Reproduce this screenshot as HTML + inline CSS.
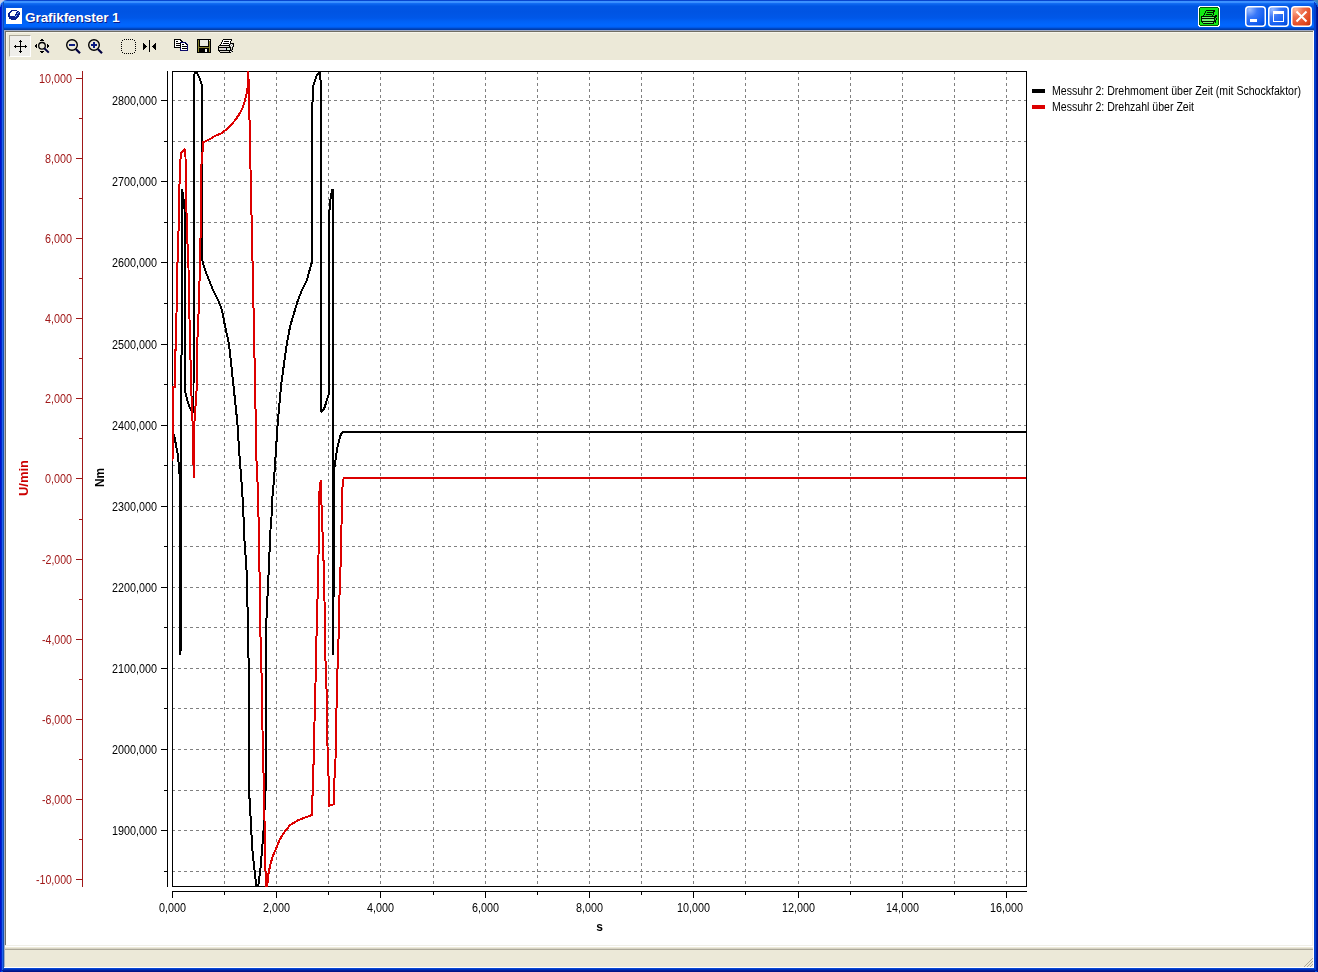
<!DOCTYPE html>
<html><head><meta charset="utf-8"><title>Grafikfenster 1</title>
<style>
html,body{margin:0;padding:0;}
body{width:1318px;height:972px;overflow:hidden;position:relative;background:#c4cce8;font-family:"Liberation Sans",sans-serif;}
.abs{position:absolute;}
#title{left:0;top:0;width:1318px;height:30px;border-radius:7px 7px 0 0;
background:linear-gradient(to bottom,#0846d0 0px,#0846d0 1px,#3d95ff 1px,#3a8cff 3px,#1a72f5 3px,#0a66f0 4px,#0860ea 5px,#0056e4 6px,#0054e3 12px,#0057e8 18px,#0060f5 21px,#0066ff 25px,#0062f8 27px,#0050d8 28px,#0040b0 29px,#003aa8 30px);}
#ttext{left:25px;top:8.6px;font-weight:bold;font-size:13.6px;line-height:17px;color:#fff;text-shadow:1px 1px 0 #0a1e8c;letter-spacing:-0.1px;white-space:nowrap;}
.tb{font-size:11px;color:#000;white-space:nowrap;}
</style></head><body>

<div class="abs" style="left:1308px;top:0;width:10px;height:8px;background:#3a80c0;"></div>
<div class="abs" style="left:0;top:30px;width:1318px;height:942px;background:#0054e3;"></div>
<div class="abs" style="left:4px;top:968px;width:1310px;height:1px;background:#0848d8;"></div>
<div class="abs" style="left:1px;top:969px;width:1316px;height:1px;background:#0030b8;"></div>
<div class="abs" style="left:2px;top:970px;width:1314px;height:1px;background:#00209c;"></div>
<div class="abs" style="left:3px;top:971px;width:1312px;height:1px;background:#001488;"></div>
<div id="title" class="abs"></div>
<div class="abs" style="left:0px;top:7px;width:1px;height:965px;background:#0010d0;"></div>
<div class="abs" style="left:1px;top:5px;width:1px;height:966px;background:#0028c8;"></div>
<div class="abs" style="left:2px;top:3px;width:1px;height:967px;background:#2060f0;"></div>
<div class="abs" style="left:3px;top:2px;width:1px;height:967px;background:#1050b8;"></div>
<div class="abs" style="left:1314px;top:2px;width:1px;height:967px;background:#0840c8;"></div>
<div class="abs" style="left:1315px;top:3px;width:1px;height:967px;background:#0040d0;"></div>
<div class="abs" style="left:1316px;top:5px;width:1px;height:966px;background:#001c9c;"></div>
<div class="abs" style="left:1317px;top:7px;width:1px;height:965px;background:#001090;"></div>
<div class="abs" style="left:4px;top:30px;width:1310px;height:938px;background:#ece9d8;"></div>
<div class="abs" style="left:4px;top:30px;width:1px;height:938px;background:#a0acc8;"></div>
<div class="abs" style="left:4px;top:30px;width:1310px;height:1px;background:#a0acc8;"></div>
<div class="abs" style="left:5px;top:31px;width:1px;height:914px;background:#716f64;"></div>
<div class="abs" style="left:5px;top:31px;width:1308px;height:1px;background:#716f64;"></div>
<div class="abs" style="left:6px;top:32px;width:1306px;height:1px;background:#f7f5ec;"></div>
<div class="abs" style="left:6px;top:32px;width:1px;height:28px;background:#f7f5ec;"></div>
<div class="abs" style="left:1313px;top:31px;width:1px;height:937px;background:#ffffff;"></div>
<div class="abs" style="left:6px;top:60px;width:1306px;height:885px;background:#ffffff;"></div>
<div class="abs" style="left:1312px;top:60px;width:1px;height:885px;background:#f0efe8;"></div>
<div class="abs" style="left:6px;top:945px;width:1307px;height:1px;background:#f0efe8;"></div>
<div class="abs" style="left:5px;top:946px;width:1308px;height:1px;background:#ffffff;"></div>
<div class="abs" style="left:5px;top:949px;width:1308px;height:1px;background:#aca899;"></div>
<div class="abs" style="left:5px;top:948px;width:1308px;height:1px;background:#d8d4c4;"></div>
<div class="abs" style="left:4px;top:967px;width:1310px;height:1px;background:#ffffff;"></div>
<svg class="abs" style="left:1304px;top:958px" width="9" height="9" viewBox="0 0 9 9" shape-rendering="crispEdges">
<g fill="#aca899"><rect x="7" y="1" width="1" height="1"/><rect x="6" y="2" width="1" height="1"/><rect x="5" y="3" width="1" height="1"/><rect x="4" y="4" width="1" height="1"/><rect x="3" y="5" width="1" height="1"/><rect x="2" y="6" width="1" height="1"/><rect x="1" y="7" width="1" height="1"/>
<rect x="7" y="4" width="1" height="1"/><rect x="6" y="5" width="1" height="1"/><rect x="5" y="6" width="1" height="1"/><rect x="4" y="7" width="1" height="1"/>
<rect x="7" y="7" width="1" height="1"/>
<rect x="8" y="0" width="1" height="1"/><rect x="8" y="3" width="1" height="1"/><rect x="8" y="6" width="1" height="1"/><rect x="0" y="8" width="1" height="1"/><rect x="3" y="8" width="1" height="1"/><rect x="6" y="8" width="1" height="1"/></g>
</svg>
<svg class="abs" style="left:6px;top:8px" width="16" height="16" viewBox="6 8 16 16" shape-rendering="crispEdges"><rect x="6" y="8" width="16" height="16" fill="#fff"/><rect x="11" y="10" width="6" height="1" fill="#0a1e90"/><rect x="10" y="11" width="2" height="1" fill="#0a1e90"/><rect x="17" y="11" width="2" height="1" fill="#0a1e90"/><rect x="9" y="12" width="2" height="1" fill="#0a1e90"/><rect x="16" y="12" width="2" height="1" fill="#0a1e90"/><rect x="18" y="12" width="1" height="1" fill="#7fb0ff"/><rect x="19" y="12" width="1" height="1" fill="#0a1e90"/><rect x="8" y="13" width="2" height="1" fill="#0a1e90"/><rect x="16" y="13" width="1" height="1" fill="#0a1e90"/><rect x="17" y="13" width="1" height="1" fill="#7fb0ff"/><rect x="18" y="13" width="2" height="1" fill="#0a1e90"/><rect x="8" y="14" width="2" height="1" fill="#0a1e90"/><rect x="15" y="14" width="5" height="1" fill="#0a1e90"/><rect x="8" y="15" width="2" height="1" fill="#0a1e90"/><rect x="15" y="15" width="1" height="1" fill="#0a1e90"/><rect x="16" y="15" width="1" height="1" fill="#7fb0ff"/><rect x="17" y="15" width="2" height="1" fill="#0a1e90"/><rect x="8" y="16" width="7" height="1" fill="#0a1e90"/><rect x="15" y="16" width="1" height="1" fill="#7fb0ff"/><rect x="16" y="16" width="3" height="1" fill="#0a1e90"/><rect x="9" y="17" width="9" height="1" fill="#0a1e90"/><rect x="9" y="18" width="8" height="1" fill="#0a1e90"/><rect x="11" y="19" width="5" height="1" fill="#0a1e90"/></svg>
<div id="ttext" class="abs">Grafikfenster 1</div>
<svg class="abs" style="left:1198px;top:6px" width="22" height="21" viewBox="1198 6 22 21" shape-rendering="crispEdges"><rect x="1198" y="7" width="22" height="19" fill="#fff"/><rect x="1199" y="6" width="20" height="21" fill="#fff"/><rect x="1199" y="8" width="20" height="17" fill="#006000"/><rect x="1200" y="7" width="18" height="19" fill="#006000"/><rect x="1200" y="8" width="18" height="17" fill="#14ea14"/><rect x="1206" y="10" width="9" height="1" fill="#001400"/><rect x="1205" y="11" width="1" height="1" fill="#001400"/><rect x="1213" y="11" width="2" height="1" fill="#001400"/><rect x="1205" y="12" width="1" height="1" fill="#001400"/><rect x="1207" y="12" width="7" height="1" fill="#001400"/><rect x="1204" y="13" width="1" height="1" fill="#001400"/><rect x="1213" y="13" width="1" height="1" fill="#001400"/><rect x="1204" y="14" width="1" height="1" fill="#001400"/><rect x="1206" y="14" width="6" height="1" fill="#001400"/><rect x="1213" y="14" width="1" height="1" fill="#001400"/><rect x="1203" y="15" width="1" height="1" fill="#001400"/><rect x="1212" y="15" width="1" height="1" fill="#001400"/><rect x="1215" y="15" width="2" height="1" fill="#001400"/><rect x="1201" y="16" width="16" height="1" fill="#001400"/><rect x="1201" y="17" width="1" height="1" fill="#001400"/><rect x="1202" y="17" width="12" height="1" fill="#70f070"/><rect x="1214" y="17" width="2" height="1" fill="#001400"/><rect x="1201" y="18" width="14" height="1" fill="#001400"/><rect x="1216" y="18" width="1" height="1" fill="#001400"/><rect x="1201" y="19" width="1" height="1" fill="#001400"/><rect x="1202" y="19" width="12" height="1" fill="#70f070"/><rect x="1214" y="19" width="1" height="1" fill="#001400"/><rect x="1216" y="19" width="1" height="1" fill="#001400"/><rect x="1201" y="20" width="1" height="1" fill="#001400"/><rect x="1202" y="20" width="12" height="1" fill="#70f070"/><rect x="1214" y="20" width="2" height="1" fill="#001400"/><rect x="1201" y="21" width="15" height="1" fill="#001400"/><rect x="1202" y="22" width="1" height="1" fill="#001400"/><rect x="1203" y="22" width="10" height="1" fill="#70f070"/><rect x="1213" y="22" width="1" height="1" fill="#001400"/><rect x="1215" y="22" width="1" height="1" fill="#001400"/><rect x="1203" y="23" width="11" height="1" fill="#001400"/></svg>
<svg class="abs" style="left:1245px;top:6px" width="21" height="21" viewBox="0 0 21 21"><defs><radialGradient id="gblue" cx="0.2" cy="0.15" r="1.1"><stop offset="0" stop-color="#9bbcff"/><stop offset="0.35" stop-color="#3a78f8"/><stop offset="0.8" stop-color="#0a58ee"/><stop offset="1" stop-color="#0044c8"/></radialGradient><radialGradient id="gclose" cx="0.2" cy="0.15" r="1.1"><stop offset="0" stop-color="#ffb89a"/><stop offset="0.35" stop-color="#ee7050"/><stop offset="0.8" stop-color="#e0441a"/><stop offset="1" stop-color="#b83010"/></radialGradient></defs><rect x="0.75" y="0.75" width="19.5" height="19.5" rx="3" fill="url(#gblue)" stroke="#ffffff" stroke-width="1.5"/><rect x="5" y="13" width="7" height="3" fill="#fff"/></svg>
<svg class="abs" style="left:1268px;top:6px" width="21" height="21" viewBox="0 0 21 21"><defs><radialGradient id="gblue" cx="0.2" cy="0.15" r="1.1"><stop offset="0" stop-color="#9bbcff"/><stop offset="0.35" stop-color="#3a78f8"/><stop offset="0.8" stop-color="#0a58ee"/><stop offset="1" stop-color="#0044c8"/></radialGradient><radialGradient id="gclose" cx="0.2" cy="0.15" r="1.1"><stop offset="0" stop-color="#ffb89a"/><stop offset="0.35" stop-color="#ee7050"/><stop offset="0.8" stop-color="#e0441a"/><stop offset="1" stop-color="#b83010"/></radialGradient></defs><rect x="0.75" y="0.75" width="19.5" height="19.5" rx="3" fill="url(#gblue)" stroke="#ffffff" stroke-width="1.5"/><rect x="5.5" y="5.5" width="10" height="10" fill="none" stroke="#fff" stroke-width="1"/><rect x="5" y="5" width="11" height="3" fill="#fff"/></svg>
<svg class="abs" style="left:1291px;top:6px" width="21" height="21" viewBox="0 0 21 21"><defs><radialGradient id="gblue" cx="0.2" cy="0.15" r="1.1"><stop offset="0" stop-color="#9bbcff"/><stop offset="0.35" stop-color="#3a78f8"/><stop offset="0.8" stop-color="#0a58ee"/><stop offset="1" stop-color="#0044c8"/></radialGradient><radialGradient id="gclose" cx="0.2" cy="0.15" r="1.1"><stop offset="0" stop-color="#ffb89a"/><stop offset="0.35" stop-color="#ee7050"/><stop offset="0.8" stop-color="#e0441a"/><stop offset="1" stop-color="#b83010"/></radialGradient></defs><rect x="0.75" y="0.75" width="19.5" height="19.5" rx="3" fill="url(#gclose)" stroke="#ffffff" stroke-width="1.5"/><path d="M5.5 5.5 L15.5 15.5 M15.5 5.5 L5.5 15.5" stroke="#fff" stroke-width="2"/></svg>
<div class="abs" style="left:9px;top:35px;background:#efeeea;border-left:1px solid #aca899;border-top:1px solid #aca899;border-right:1px solid #fff;border-bottom:1px solid #fff;box-sizing:border-box;width:22px;height:22px;"></div>
<svg class="abs" style="left:0;top:30px" width="250" height="30" viewBox="0 30 250 30" shape-rendering="crispEdges"><g fill="#000"><rect x="20" y="40" width="1" height="13"/><rect x="14" y="46" width="13" height="1"/><rect x="19" y="41" width="3" height="1"/><rect x="19" y="51" width="3" height="1"/><rect x="15" y="45" width="1" height="3"/><rect x="25" y="45" width="1" height="3"/><rect x="41" y="39" width="2" height="1"/><rect x="40" y="40" width="4" height="1"/><rect x="40" y="51" width="4" height="1"/><rect x="41" y="52" width="2" height="1"/><rect x="35" y="45" width="1" height="2"/><rect x="36" y="44" width="1" height="4"/><rect x="48" y="45" width="1" height="2"/><rect x="47" y="44" width="1" height="4"/></g><rect x="124" y="39" width="1" height="1"/><rect x="124" y="53" width="1" height="1"/><rect x="126" y="39" width="1" height="1"/><rect x="126" y="53" width="1" height="1"/><rect x="128" y="39" width="1" height="1"/><rect x="128" y="53" width="1" height="1"/><rect x="130" y="39" width="1" height="1"/><rect x="130" y="53" width="1" height="1"/><rect x="132" y="39" width="1" height="1"/><rect x="132" y="53" width="1" height="1"/><rect x="121" y="42" width="1" height="1"/><rect x="135" y="42" width="1" height="1"/><rect x="121" y="44" width="1" height="1"/><rect x="135" y="44" width="1" height="1"/><rect x="121" y="46" width="1" height="1"/><rect x="135" y="46" width="1" height="1"/><rect x="121" y="48" width="1" height="1"/><rect x="135" y="48" width="1" height="1"/><rect x="121" y="50" width="1" height="1"/><rect x="135" y="50" width="1" height="1"/><rect x="122" y="40" width="1" height="1"/><rect x="134" y="40" width="1" height="1"/><rect x="122" y="52" width="1" height="1"/><rect x="134" y="52" width="1" height="1"/><rect x="149" y="40" width="1" height="12"/><rect x="143" y="43" width="1" height="7"/><rect x="144" y="44" width="1" height="5"/><rect x="145" y="45" width="1" height="3"/><rect x="146" y="46" width="1" height="1"/><rect x="155" y="43" width="1" height="7"/><rect x="154" y="44" width="1" height="5"/><rect x="153" y="45" width="1" height="3"/><rect x="152" y="46" width="1" height="1"/></svg>
<svg class="abs" style="left:0;top:30px" width="250" height="30" viewBox="0 30 250 30">
<circle cx="42" cy="45.8" r="3.3" fill="none" stroke="#000" stroke-width="1.3"/>
<path d="M44.5 48.5 L48.8 52.6" stroke="#000040" stroke-width="2"/>
<circle cx="72" cy="45" r="5.3" fill="none" stroke="#000" stroke-width="1.4"/>
<path d="M75.8 49 L80 53.2" stroke="#000040" stroke-width="2.2"/>
<rect x="69" y="44" width="6" height="2" fill="#0a1a80"/>
<circle cx="94" cy="45" r="5.3" fill="none" stroke="#000" stroke-width="1.4"/>
<path d="M97.8 49 L102 53.2" stroke="#000040" stroke-width="2.2"/>
<rect x="91" y="44" width="6" height="2" fill="#0a1a80"/><rect x="93" y="42" width="2" height="6" fill="#0a1a80"/>
</svg>
<svg class="abs" style="left:0;top:30px" width="250" height="30" viewBox="0 30 250 30" shape-rendering="crispEdges"><rect x="174" y="39" width="7" height="1" fill="#000"/><rect x="174" y="40" width="1" height="1" fill="#000"/><rect x="175" y="40" width="5" height="1" fill="#fff"/><rect x="180" y="40" width="2" height="1" fill="#000"/><rect x="174" y="41" width="1" height="1" fill="#000"/><rect x="175" y="41" width="1" height="1" fill="#fff"/><rect x="176" y="41" width="2" height="1" fill="#000"/><rect x="178" y="41" width="3" height="1" fill="#fff"/><rect x="181" y="41" width="2" height="1" fill="#000"/><rect x="174" y="42" width="1" height="1" fill="#000"/><rect x="175" y="42" width="5" height="1" fill="#fff"/><rect x="180" y="42" width="6" height="1" fill="#0a0a6a"/><rect x="174" y="43" width="1" height="1" fill="#000"/><rect x="175" y="43" width="1" height="1" fill="#fff"/><rect x="176" y="43" width="5" height="1" fill="#000"/><rect x="181" y="43" width="4" height="1" fill="#fff"/><rect x="185" y="43" width="1" height="1" fill="#000"/><rect x="186" y="43" width="1" height="1" fill="#0a0a6a"/><rect x="174" y="44" width="1" height="1" fill="#000"/><rect x="175" y="44" width="5" height="1" fill="#fff"/><rect x="180" y="44" width="1" height="1" fill="#000"/><rect x="181" y="44" width="1" height="1" fill="#fff"/><rect x="182" y="44" width="2" height="1" fill="#000"/><rect x="184" y="44" width="2" height="1" fill="#fff"/><rect x="186" y="44" width="1" height="1" fill="#000"/><rect x="187" y="44" width="1" height="1" fill="#0a0a6a"/><rect x="174" y="45" width="1" height="1" fill="#000"/><rect x="175" y="45" width="1" height="1" fill="#fff"/><rect x="176" y="45" width="5" height="1" fill="#000"/><rect x="181" y="45" width="6" height="1" fill="#fff"/><rect x="187" y="45" width="1" height="1" fill="#0a0a6a"/><rect x="174" y="46" width="1" height="1" fill="#000"/><rect x="175" y="46" width="5" height="1" fill="#fff"/><rect x="180" y="46" width="1" height="1" fill="#000"/><rect x="181" y="46" width="1" height="1" fill="#fff"/><rect x="182" y="46" width="5" height="1" fill="#000"/><rect x="187" y="46" width="1" height="1" fill="#0a0a6a"/><rect x="174" y="47" width="7" height="1" fill="#000"/><rect x="181" y="47" width="6" height="1" fill="#fff"/><rect x="187" y="47" width="1" height="1" fill="#0a0a6a"/><rect x="180" y="48" width="1" height="1" fill="#0a0a6a"/><rect x="181" y="48" width="1" height="1" fill="#fff"/><rect x="182" y="48" width="5" height="1" fill="#000"/><rect x="187" y="48" width="1" height="1" fill="#0a0a6a"/><rect x="180" y="49" width="1" height="1" fill="#0a0a6a"/><rect x="181" y="49" width="6" height="1" fill="#fff"/><rect x="187" y="49" width="1" height="1" fill="#0a0a6a"/><rect x="180" y="50" width="8" height="1" fill="#0a0a6a"/><rect x="197" y="39" width="14" height="1" fill="#000"/><rect x="197" y="40" width="1" height="1" fill="#000"/><rect x="198" y="40" width="1" height="1" fill="#85802a"/><rect x="199" y="40" width="1" height="1" fill="#000"/><rect x="200" y="40" width="8" height="1" fill="#ecebe0"/><rect x="208" y="40" width="1" height="1" fill="#000"/><rect x="209" y="40" width="1" height="1" fill="#f4f4f4"/><rect x="210" y="40" width="1" height="1" fill="#000"/><rect x="197" y="41" width="1" height="1" fill="#000"/><rect x="198" y="41" width="1" height="1" fill="#85802a"/><rect x="199" y="41" width="1" height="1" fill="#000"/><rect x="200" y="41" width="8" height="1" fill="#ecebe0"/><rect x="208" y="41" width="1" height="1" fill="#000"/><rect x="209" y="41" width="1" height="1" fill="#85802a"/><rect x="210" y="41" width="1" height="1" fill="#000"/><rect x="197" y="42" width="1" height="1" fill="#000"/><rect x="198" y="42" width="1" height="1" fill="#85802a"/><rect x="199" y="42" width="1" height="1" fill="#000"/><rect x="200" y="42" width="8" height="1" fill="#ecebe0"/><rect x="208" y="42" width="1" height="1" fill="#000"/><rect x="209" y="42" width="1" height="1" fill="#85802a"/><rect x="210" y="42" width="1" height="1" fill="#000"/><rect x="197" y="43" width="1" height="1" fill="#000"/><rect x="198" y="43" width="1" height="1" fill="#85802a"/><rect x="199" y="43" width="1" height="1" fill="#000"/><rect x="200" y="43" width="8" height="1" fill="#ecebe0"/><rect x="208" y="43" width="1" height="1" fill="#000"/><rect x="209" y="43" width="1" height="1" fill="#85802a"/><rect x="210" y="43" width="1" height="1" fill="#000"/><rect x="197" y="44" width="1" height="1" fill="#000"/><rect x="198" y="44" width="1" height="1" fill="#85802a"/><rect x="199" y="44" width="1" height="1" fill="#000"/><rect x="200" y="44" width="8" height="1" fill="#ecebe0"/><rect x="208" y="44" width="1" height="1" fill="#000"/><rect x="209" y="44" width="1" height="1" fill="#85802a"/><rect x="210" y="44" width="1" height="1" fill="#000"/><rect x="197" y="45" width="1" height="1" fill="#000"/><rect x="198" y="45" width="1" height="1" fill="#85802a"/><rect x="199" y="45" width="1" height="1" fill="#000"/><rect x="200" y="45" width="8" height="1" fill="#ecebe0"/><rect x="208" y="45" width="1" height="1" fill="#000"/><rect x="209" y="45" width="1" height="1" fill="#85802a"/><rect x="210" y="45" width="1" height="1" fill="#000"/><rect x="197" y="46" width="1" height="1" fill="#000"/><rect x="198" y="46" width="1" height="1" fill="#85802a"/><rect x="199" y="46" width="10" height="1" fill="#000"/><rect x="209" y="46" width="1" height="1" fill="#85802a"/><rect x="210" y="46" width="1" height="1" fill="#000"/><rect x="197" y="47" width="1" height="1" fill="#000"/><rect x="198" y="47" width="12" height="1" fill="#85802a"/><rect x="210" y="47" width="1" height="1" fill="#000"/><rect x="197" y="48" width="1" height="1" fill="#000"/><rect x="198" y="48" width="1" height="1" fill="#85802a"/><rect x="199" y="48" width="10" height="1" fill="#000"/><rect x="209" y="48" width="1" height="1" fill="#85802a"/><rect x="210" y="48" width="1" height="1" fill="#000"/><rect x="197" y="49" width="1" height="1" fill="#000"/><rect x="198" y="49" width="1" height="1" fill="#85802a"/><rect x="199" y="49" width="6" height="1" fill="#000"/><rect x="205" y="49" width="2" height="1" fill="#f4f4f4"/><rect x="207" y="49" width="2" height="1" fill="#000"/><rect x="209" y="49" width="1" height="1" fill="#85802a"/><rect x="210" y="49" width="1" height="1" fill="#000"/><rect x="197" y="50" width="1" height="1" fill="#000"/><rect x="198" y="50" width="1" height="1" fill="#85802a"/><rect x="199" y="50" width="6" height="1" fill="#000"/><rect x="205" y="50" width="2" height="1" fill="#f4f4f4"/><rect x="207" y="50" width="2" height="1" fill="#000"/><rect x="209" y="50" width="1" height="1" fill="#85802a"/><rect x="210" y="50" width="1" height="1" fill="#000"/><rect x="197" y="51" width="1" height="1" fill="#000"/><rect x="198" y="51" width="1" height="1" fill="#85802a"/><rect x="199" y="51" width="6" height="1" fill="#000"/><rect x="205" y="51" width="2" height="1" fill="#f4f4f4"/><rect x="207" y="51" width="2" height="1" fill="#000"/><rect x="209" y="51" width="1" height="1" fill="#85802a"/><rect x="210" y="51" width="1" height="1" fill="#000"/><rect x="197" y="52" width="14" height="1" fill="#000"/><rect x="223" y="39" width="9" height="1" fill="#000"/><rect x="222" y="40" width="1" height="1" fill="#000"/><rect x="223" y="40" width="8" height="1" fill="#fff"/><rect x="231" y="40" width="1" height="1" fill="#000"/><rect x="222" y="41" width="1" height="1" fill="#000"/><rect x="223" y="41" width="1" height="1" fill="#fff"/><rect x="224" y="41" width="5" height="1" fill="#000"/><rect x="229" y="41" width="1" height="1" fill="#fff"/><rect x="230" y="41" width="1" height="1" fill="#000"/><rect x="221" y="42" width="1" height="1" fill="#000"/><rect x="222" y="42" width="8" height="1" fill="#fff"/><rect x="230" y="42" width="1" height="1" fill="#000"/><rect x="221" y="43" width="1" height="1" fill="#000"/><rect x="222" y="43" width="1" height="1" fill="#fff"/><rect x="223" y="43" width="6" height="1" fill="#000"/><rect x="229" y="43" width="1" height="1" fill="#fff"/><rect x="230" y="43" width="4" height="1" fill="#000"/><rect x="220" y="44" width="1" height="1" fill="#000"/><rect x="221" y="44" width="8" height="1" fill="#fff"/><rect x="229" y="44" width="1" height="1" fill="#000"/><rect x="230" y="44" width="1" height="1" fill="#909090"/><rect x="231" y="44" width="1" height="1" fill="#fff"/><rect x="232" y="44" width="1" height="1" fill="#909090"/><rect x="233" y="44" width="1" height="1" fill="#000"/><rect x="219" y="45" width="11" height="1" fill="#000"/><rect x="230" y="45" width="1" height="1" fill="#fff"/><rect x="231" y="45" width="1" height="1" fill="#909090"/><rect x="232" y="45" width="1" height="1" fill="#fff"/><rect x="233" y="45" width="1" height="1" fill="#000"/><rect x="218" y="46" width="1" height="1" fill="#000"/><rect x="219" y="46" width="10" height="1" fill="#d8d6cc"/><rect x="229" y="46" width="1" height="1" fill="#000"/><rect x="230" y="46" width="1" height="1" fill="#909090"/><rect x="231" y="46" width="1" height="1" fill="#fff"/><rect x="232" y="46" width="1" height="1" fill="#909090"/><rect x="233" y="46" width="1" height="1" fill="#000"/><rect x="218" y="47" width="13" height="1" fill="#000"/><rect x="231" y="47" width="1" height="1" fill="#d8d6cc"/><rect x="232" y="47" width="1" height="1" fill="#000"/><rect x="218" y="48" width="1" height="1" fill="#000"/><rect x="219" y="48" width="5" height="1" fill="#d8d6cc"/><rect x="224" y="48" width="2" height="1" fill="#d8d0f0"/><rect x="226" y="48" width="1" height="1" fill="#000"/><rect x="227" y="48" width="3" height="1" fill="#d0e8d0"/><rect x="230" y="48" width="1" height="1" fill="#000"/><rect x="231" y="48" width="1" height="1" fill="#d8d6cc"/><rect x="232" y="48" width="1" height="1" fill="#000"/><rect x="218" y="49" width="1" height="1" fill="#000"/><rect x="219" y="49" width="5" height="1" fill="#d8d6cc"/><rect x="224" y="49" width="2" height="1" fill="#d8d0f0"/><rect x="226" y="49" width="1" height="1" fill="#000"/><rect x="227" y="49" width="3" height="1" fill="#d0e8d0"/><rect x="230" y="49" width="1" height="1" fill="#000"/><rect x="231" y="49" width="1" height="1" fill="#909090"/><rect x="232" y="49" width="1" height="1" fill="#000"/><rect x="218" y="50" width="14" height="1" fill="#000"/><rect x="219" y="51" width="1" height="1" fill="#000"/><rect x="220" y="51" width="9" height="1" fill="#d8d6cc"/><rect x="229" y="51" width="1" height="1" fill="#000"/><rect x="230" y="51" width="1" height="1" fill="#fff"/><rect x="231" y="51" width="1" height="1" fill="#909090"/><rect x="232" y="51" width="1" height="1" fill="#000"/><rect x="220" y="52" width="11" height="1" fill="#000"/></svg>
<svg class="abs" style="left:0;top:0;will-change:transform" width="1318" height="972" viewBox="0 0 1318 972">
<path d="M224.5 71V886 M276.5 71V886 M328.5 71V886 M380.5 71V886 M433.5 71V886 M485.5 71V886 M537.5 71V886 M589.5 71V886 M641.5 71V886 M693.5 71V886 M745.5 71V886 M798.5 71V886 M850.5 71V886 M902.5 71V886 M954.5 71V886 M1006.5 71V886 M172 100.5H1026 M172 141.5H1026 M172 181.5H1026 M172 222.5H1026 M172 262.5H1026 M172 303.5H1026 M172 344.5H1026 M172 384.5H1026 M172 425.5H1026 M172 465.5H1026 M172 506.5H1026 M172 546.5H1026 M172 587.5H1026 M172 627.5H1026 M172 668.5H1026 M172 708.5H1026 M172 749.5H1026 M172 790.5H1026 M172 830.5H1026 M172 871.5H1026" stroke="#808080" stroke-width="1" stroke-dasharray="3 3" fill="none" shape-rendering="crispEdges"/>
<rect x="172.5" y="71.5" width="854" height="815" fill="none" stroke="#000" stroke-width="1" shape-rendering="crispEdges"/>
<path d="M172 891.5H1027 M172.5 891V898 M224.5 891V895 M276.5 891V898 M328.5 891V895 M380.5 891V898 M433.5 891V895 M485.5 891V898 M537.5 891V895 M589.5 891V898 M641.5 891V895 M693.5 891V898 M745.5 891V895 M798.5 891V898 M850.5 891V895 M902.5 891V898 M954.5 891V895 M1006.5 891V898" stroke="#000" stroke-width="1" fill="none" shape-rendering="crispEdges"/>
<path d="M167.5 71V887 M161 100.5H168 M164 141.5H168 M161 181.5H168 M164 222.5H168 M161 262.5H168 M164 303.5H168 M161 344.5H168 M164 384.5H168 M161 425.5H168 M164 465.5H168 M161 506.5H168 M164 546.5H168 M161 587.5H168 M164 627.5H168 M161 668.5H168 M164 708.5H168 M161 749.5H168 M164 790.5H168 M161 830.5H168 M164 871.5H168" stroke="#000" stroke-width="1" fill="none" shape-rendering="crispEdges"/>
<path d="M82.5 71V887 M76 78.5H83 M79 118.5H83 M76 158.5H83 M79 198.5H83 M76 238.5H83 M79 278.5H83 M76 318.5H83 M79 358.5H83 M76 398.5H83 M79 438.5H83 M76 478.5H83 M79 519.5H83 M76 559.5H83 M79 599.5H83 M76 639.5H83 M79 679.5H83 M76 719.5H83 M79 759.5H83 M76 799.5H83 M79 839.5H83 M76 879.5H83" stroke="#a01818" stroke-width="1" fill="none" shape-rendering="crispEdges"/>
<text x="157" y="105" font-family="Liberation Sans" font-size="12" font-weight="normal" text-anchor="end" fill="#000" textLength="45" lengthAdjust="spacingAndGlyphs">2800,000</text>
<text x="157" y="186" font-family="Liberation Sans" font-size="12" font-weight="normal" text-anchor="end" fill="#000" textLength="45" lengthAdjust="spacingAndGlyphs">2700,000</text>
<text x="157" y="267" font-family="Liberation Sans" font-size="12" font-weight="normal" text-anchor="end" fill="#000" textLength="45" lengthAdjust="spacingAndGlyphs">2600,000</text>
<text x="157" y="349" font-family="Liberation Sans" font-size="12" font-weight="normal" text-anchor="end" fill="#000" textLength="45" lengthAdjust="spacingAndGlyphs">2500,000</text>
<text x="157" y="430" font-family="Liberation Sans" font-size="12" font-weight="normal" text-anchor="end" fill="#000" textLength="45" lengthAdjust="spacingAndGlyphs">2400,000</text>
<text x="157" y="511" font-family="Liberation Sans" font-size="12" font-weight="normal" text-anchor="end" fill="#000" textLength="45" lengthAdjust="spacingAndGlyphs">2300,000</text>
<text x="157" y="592" font-family="Liberation Sans" font-size="12" font-weight="normal" text-anchor="end" fill="#000" textLength="45" lengthAdjust="spacingAndGlyphs">2200,000</text>
<text x="157" y="673" font-family="Liberation Sans" font-size="12" font-weight="normal" text-anchor="end" fill="#000" textLength="45" lengthAdjust="spacingAndGlyphs">2100,000</text>
<text x="157" y="754" font-family="Liberation Sans" font-size="12" font-weight="normal" text-anchor="end" fill="#000" textLength="45" lengthAdjust="spacingAndGlyphs">2000,000</text>
<text x="157" y="835" font-family="Liberation Sans" font-size="12" font-weight="normal" text-anchor="end" fill="#000" textLength="45" lengthAdjust="spacingAndGlyphs">1900,000</text>
<text x="72" y="83" font-family="Liberation Sans" font-size="12" font-weight="normal" text-anchor="end" fill="#a01818" textLength="33" lengthAdjust="spacingAndGlyphs">10,000</text>
<text x="72" y="163" font-family="Liberation Sans" font-size="12" font-weight="normal" text-anchor="end" fill="#a01818" textLength="27" lengthAdjust="spacingAndGlyphs">8,000</text>
<text x="72" y="243" font-family="Liberation Sans" font-size="12" font-weight="normal" text-anchor="end" fill="#a01818" textLength="27" lengthAdjust="spacingAndGlyphs">6,000</text>
<text x="72" y="323" font-family="Liberation Sans" font-size="12" font-weight="normal" text-anchor="end" fill="#a01818" textLength="27" lengthAdjust="spacingAndGlyphs">4,000</text>
<text x="72" y="403" font-family="Liberation Sans" font-size="12" font-weight="normal" text-anchor="end" fill="#a01818" textLength="27" lengthAdjust="spacingAndGlyphs">2,000</text>
<text x="72" y="483" font-family="Liberation Sans" font-size="12" font-weight="normal" text-anchor="end" fill="#a01818" textLength="27" lengthAdjust="spacingAndGlyphs">0,000</text>
<text x="72" y="564" font-family="Liberation Sans" font-size="12" font-weight="normal" text-anchor="end" fill="#a01818" textLength="30" lengthAdjust="spacingAndGlyphs">-2,000</text>
<text x="72" y="644" font-family="Liberation Sans" font-size="12" font-weight="normal" text-anchor="end" fill="#a01818" textLength="30" lengthAdjust="spacingAndGlyphs">-4,000</text>
<text x="72" y="724" font-family="Liberation Sans" font-size="12" font-weight="normal" text-anchor="end" fill="#a01818" textLength="30" lengthAdjust="spacingAndGlyphs">-6,000</text>
<text x="72" y="804" font-family="Liberation Sans" font-size="12" font-weight="normal" text-anchor="end" fill="#a01818" textLength="30" lengthAdjust="spacingAndGlyphs">-8,000</text>
<text x="72" y="884" font-family="Liberation Sans" font-size="12" font-weight="normal" text-anchor="end" fill="#a01818" textLength="36" lengthAdjust="spacingAndGlyphs">-10,000</text>
<text x="172.5" y="912" font-family="Liberation Sans" font-size="12" font-weight="normal" text-anchor="middle" fill="#000" textLength="27" lengthAdjust="spacingAndGlyphs">0,000</text>
<text x="276.5" y="912" font-family="Liberation Sans" font-size="12" font-weight="normal" text-anchor="middle" fill="#000" textLength="27" lengthAdjust="spacingAndGlyphs">2,000</text>
<text x="380.5" y="912" font-family="Liberation Sans" font-size="12" font-weight="normal" text-anchor="middle" fill="#000" textLength="27" lengthAdjust="spacingAndGlyphs">4,000</text>
<text x="485.5" y="912" font-family="Liberation Sans" font-size="12" font-weight="normal" text-anchor="middle" fill="#000" textLength="27" lengthAdjust="spacingAndGlyphs">6,000</text>
<text x="589.5" y="912" font-family="Liberation Sans" font-size="12" font-weight="normal" text-anchor="middle" fill="#000" textLength="27" lengthAdjust="spacingAndGlyphs">8,000</text>
<text x="693.5" y="912" font-family="Liberation Sans" font-size="12" font-weight="normal" text-anchor="middle" fill="#000" textLength="33" lengthAdjust="spacingAndGlyphs">10,000</text>
<text x="798.5" y="912" font-family="Liberation Sans" font-size="12" font-weight="normal" text-anchor="middle" fill="#000" textLength="33" lengthAdjust="spacingAndGlyphs">12,000</text>
<text x="902.5" y="912" font-family="Liberation Sans" font-size="12" font-weight="normal" text-anchor="middle" fill="#000" textLength="33" lengthAdjust="spacingAndGlyphs">14,000</text>
<text x="1006.5" y="912" font-family="Liberation Sans" font-size="12" font-weight="normal" text-anchor="middle" fill="#000" textLength="33" lengthAdjust="spacingAndGlyphs">16,000</text>
<text x="599.5" y="931" font-family="Liberation Sans" font-size="12" font-weight="bold" text-anchor="middle" fill="#000">s</text>
<g transform="translate(104 477.5) rotate(-90)"><text x="0" y="0" font-family="Liberation Sans" font-size="13" font-weight="bold" text-anchor="middle" fill="#000" textLength="19" lengthAdjust="spacingAndGlyphs">Nm</text></g>
<g transform="translate(28 478) rotate(-90)"><text x="0" y="0" font-family="Liberation Sans" font-size="13" font-weight="bold" text-anchor="middle" fill="#cc0000" textLength="36" lengthAdjust="spacingAndGlyphs">U/min</text></g>
<rect x="1032" y="89" width="13" height="4" fill="#000"/>
<rect x="1032" y="105" width="13" height="4" fill="#dc0000"/>
<text x="1052" y="95" font-family="Liberation Sans" font-size="12" font-weight="normal" text-anchor="start" fill="#000" textLength="249" lengthAdjust="spacingAndGlyphs">Messuhr 2: Drehmoment über Zeit (mit Schockfaktor)</text>
<text x="1052" y="111" font-family="Liberation Sans" font-size="12" font-weight="normal" text-anchor="start" fill="#000" textLength="142" lengthAdjust="spacingAndGlyphs">Messuhr 2: Drehzahl über Zeit</text>
<defs><clipPath id="pc"><rect x="172" y="71" width="855" height="816"/></clipPath></defs>
<g clip-path="url(#pc)"><path d="M172.0 431.0 L174.0 435.0 L176.0 445.0 L178.0 456.0 L179.5 474.0 L180.5 655.0 L181.2 549.0 L181.8 189.0 L183.0 195.0 L184.0 203.0 L184.8 212.0 L184.8 390.0 L186.0 395.0 L188.0 403.0 L190.0 408.0 L192.0 411.5 L193.5 412.0 L193.8 100.0 L194.5 74.0 L196.0 71.5 L198.0 75.0 L200.0 79.0 L201.5 84.0 L202.0 88.0 L202.0 160.0 L202.5 261.0 L205.0 270.0 L209.0 280.0 L213.0 290.0 L218.0 300.0 L222.0 310.0 L225.0 326.0 L229.0 344.0 L233.3 384.0 L237.4 423.0 L239.5 456.0 L241.6 483.0 L243.0 504.0 L243.7 521.0 L244.4 539.0 L245.8 559.0 L247.2 581.0 L247.4 604.0 L248.3 628.0 L248.8 700.0 L248.9 788.0 L250.2 810.0 L251.3 830.0 L252.0 846.0 L253.4 860.0 L254.8 872.0 L256.2 886.0 L258.3 886.0 L260.4 869.0 L262.4 846.0 L263.6 830.0 L265.0 800.0 L265.9 785.0 L265.9 716.0 L266.3 623.0 L267.3 600.0 L268.0 586.0 L269.4 556.0 L270.0 536.0 L271.5 517.0 L272.2 499.0 L273.6 484.0 L274.9 467.0 L275.6 456.0 L277.7 423.0 L281.2 384.0 L286.8 344.0 L290.2 326.0 L295.0 310.0 L298.0 300.0 L302.0 290.0 L307.0 280.0 L311.0 265.0 L312.4 261.0 L312.4 150.0 L311.8 106.0 L313.0 100.0 L313.2 86.0 L314.5 82.0 L315.5 79.0 L316.5 76.0 L318.0 74.0 L320.0 71.5 L321.0 88.0 L321.0 412.0 L324.0 409.0 L326.0 403.0 L328.0 396.0 L329.2 394.0 L329.5 210.0 L330.0 203.0 L331.0 195.0 L332.6 189.0 L333.0 400.0 L333.3 655.0 L334.0 471.0 L335.0 463.5 L336.0 456.7 L337.0 449.3 L338.3 444.3 L339.5 439.0 L341.0 434.0 L343.0 432.0 L1026.0 432.0" stroke="#000" stroke-width="2" fill="none" stroke-linejoin="miter" stroke-miterlimit="2" shape-rendering="crispEdges"/>
<path d="M172.5 461.0 L173.0 425.0 L173.5 387.0 L175.0 387.0 L175.5 350.0 L176.2 350.0 L176.5 314.0 L177.0 276.0 L178.4 238.0 L179.0 200.0 L180.2 163.0 L181.0 153.0 L185.0 149.0 L185.5 157.0 L186.0 192.0 L187.0 231.0 L188.5 268.0 L189.0 307.0 L190.0 331.0 L190.2 344.0 L191.0 384.0 L192.5 421.0 L193.8 478.0 L194.5 421.0 L197.0 384.0 L197.0 343.0 L198.0 331.0 L200.0 265.0 L201.3 196.0 L201.5 164.0 L202.5 152.0 L202.5 142.0 L204.0 142.0 L210.0 139.0 L215.0 136.0 L222.0 133.0 L228.0 128.0 L232.0 124.0 L236.0 119.0 L240.0 113.0 L243.0 107.0 L245.0 100.0 L247.0 92.0 L248.0 84.0 L248.3 71.5 L249.2 103.0 L250.0 146.0 L251.0 191.0 L252.0 237.0 L253.0 283.0 L254.0 331.0 L255.0 383.0 L256.0 433.0 L256.5 461.0 L257.6 484.0 L259.0 534.0 L259.7 585.0 L260.4 633.0 L261.8 683.0 L262.5 730.0 L263.6 776.0 L264.5 820.0 L265.2 861.0 L266.0 886.0 L267.3 886.0 L268.0 876.0 L270.0 866.0 L272.5 857.0 L275.5 850.0 L279.5 840.0 L283.3 833.5 L290.2 825.0 L298.5 820.0 L311.8 815.0 L312.4 799.0 L313.6 762.0 L314.5 722.0 L315.5 683.0 L316.3 644.0 L317.3 607.0 L318.0 580.0 L319.0 530.0 L319.4 492.0 L320.8 479.6 L321.5 505.0 L322.9 542.0 L324.2 581.0 L325.4 658.0 L326.8 697.0 L327.0 733.0 L328.4 770.0 L329.1 806.0 L334.0 804.0 L334.0 788.0 L336.0 749.0 L336.3 716.0 L337.4 673.0 L338.6 637.0 L339.2 600.0 L340.2 586.0 L340.6 562.0 L341.5 525.0 L342.3 489.0 L343.7 478.0 L1026.0 478.0" stroke="#dc0000" stroke-width="2" fill="none" stroke-linejoin="miter" stroke-miterlimit="2" shape-rendering="crispEdges"/></g>
</svg>
</body></html>
